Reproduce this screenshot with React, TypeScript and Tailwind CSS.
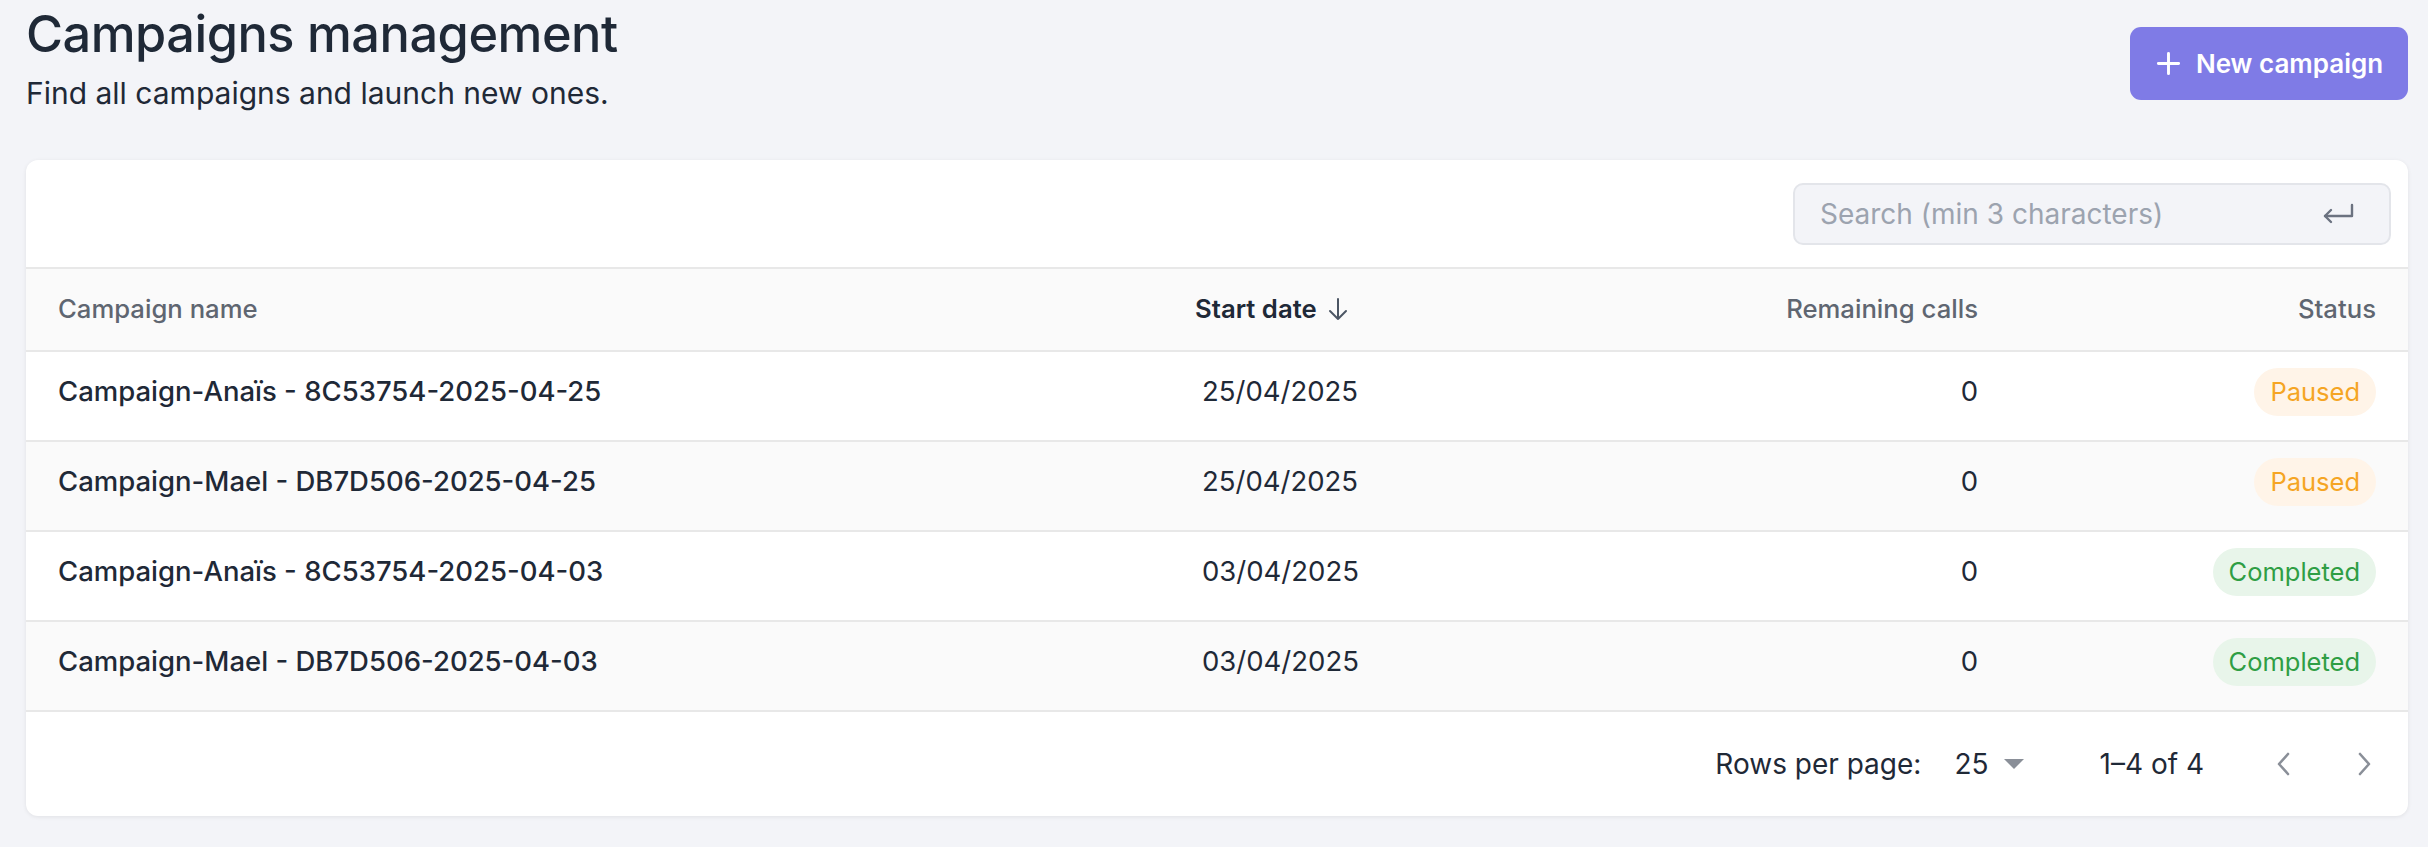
import React from 'react';

type Row = {
  name: string;
  date: string;
  remaining: number;
  status: 'Paused' | 'Completed';
};

const rows: Row[] = [
  { name: 'Campaign-Anaïs - 8C53754-2025-04-25', date: '25/04/2025', remaining: 0, status: 'Paused' },
  { name: 'Campaign-Mael - DB7D506-2025-04-25', date: '25/04/2025', remaining: 0, status: 'Paused' },
  { name: 'Campaign-Anaïs - 8C53754-2025-04-03', date: '03/04/2025', remaining: 0, status: 'Completed' },
  { name: 'Campaign-Mael - DB7D506-2025-04-03', date: '03/04/2025', remaining: 0, status: 'Completed' },
];

function StatusBadge({ status }: { status: Row['status'] }) {
  if (status === 'Paused') {
    return (
      <span className="inline-flex h-[48px] items-center rounded-full bg-[#fff4e8] px-[16px] text-[25.5px] text-[#f5a524]">
        Paused
      </span>
    );
  }
  return (
    <span className="inline-flex h-[48px] items-center rounded-full bg-[#e8f5ea] px-[16px] text-[25.5px] text-[#2f9e44]">
      Completed
    </span>
  );
}

export default function App() {
  return (
    <div className="min-h-[847px] bg-[#f3f4f8] pl-[26px] pr-[20px] pb-[31px] font-['Inter',sans-serif] text-[#1f2937]">
      {/* Page header */}
      <div className="flex items-start justify-between">
        <div className="pt-[4px]">
          <h1 className="text-[50.5px] font-medium leading-[60px] tracking-[-0.5px]">Campaigns management</h1>
          <p className="mt-[11px] text-[30px] leading-[36px]">Find all campaigns and launch new ones.</p>
        </div>
        <button className="mt-[27px] flex h-[73px] w-[278px] items-center justify-center gap-[14px] rounded-[11px] bg-[#7f7be6] text-[26px] font-semibold text-white">
          <svg width="27" height="27" viewBox="0 0 24 24" fill="none" stroke="currentColor" strokeWidth="2.6" strokeLinecap="round">
            <path d="M12 3v18M3 12h18" />
          </svg>
          New campaign
        </button>
      </div>

      {/* Table card */}
      <div className="mt-[49px] overflow-hidden rounded-[12px] bg-white shadow-[0_1px_4px_rgba(0,0,0,0.08)]">
        {/* Toolbar */}
        <div className="flex h-[107px] items-center justify-end pr-[17px]">
          <div className="flex h-[62px] w-[598px] items-center justify-between rounded-[10px] border-2 border-[#e3e5ea] bg-[#f3f4f8] pl-[25px] pr-[35px]">
            <span className="text-[28px] text-[#9ca3af]">Search (min 3 characters)</span>
            <svg width="32" height="22" viewBox="0 0 32 22" fill="none" stroke="#6b7280" strokeWidth="2.4" strokeLinecap="round" strokeLinejoin="round">
              <path d="M30 2v11H3" />
              <path d="M9 7l-6 6 6 6" />
            </svg>
          </div>
        </div>

        {/* Column header */}
        <div className="grid h-[83px] grid-cols-[1137px_437px_1fr_398px] items-center border-t-2 border-[#e8e8e8] bg-[#fafafa] text-[25.7px]">
          <div className="pl-[32px] font-medium text-[#5f6671]">Campaign name</div>
          <div className="flex items-center gap-[10px] pl-[32px] font-semibold text-[#1f2937]">
            Start date
            <svg width="22" height="26" viewBox="0 0 22 26" fill="none" stroke="#4b5563" strokeWidth="2" strokeLinecap="round" strokeLinejoin="round">
              <path d="M11 3v20M3 15l8 8 8-8" />
            </svg>
          </div>
          <div className="pr-[32px] text-right font-medium text-[#5f6671]">Remaining calls</div>
          <div className="pr-[32px] text-right font-medium text-[#5f6671]">Status</div>
        </div>

        {/* Rows */}
        {rows.map((r, i) => (
          <div
            key={r.name}
            className={`grid h-[90px] grid-cols-[1137px_437px_1fr_398px] items-center border-t-2 border-[#e8e8e8] pb-[8px] ${
              i % 2 === 1 ? 'bg-[#fafafa]' : 'bg-white'
            }`}
          >
            <div className="pl-[32px] text-[27.5px] font-medium">{r.name}</div>
            <div className="pl-[39px] text-[27.5px]">{r.date}</div>
            <div className="pr-[32px] text-right text-[27.5px]">{r.remaining}</div>
            <div className="flex justify-end pr-[32px]">
              <StatusBadge status={r.status} />
            </div>
          </div>
        ))}

        {/* Pagination */}
        <div className="flex h-[106px] items-center justify-end border-t-2 border-[#e8e8e8] pr-[36px] text-[28px]">
          <span>Rows per page:</span>
          <span className="ml-[33px]">25</span>
          <svg className="ml-[14px]" width="22" height="12" viewBox="0 0 22 12" fill="#8a8f98">
            <path d="M1 1h20L11 11z" />
          </svg>
          <span className="ml-[75px]">1–4 of 4</span>
          <svg className="ml-[72px]" width="15" height="24" viewBox="0 0 15 24" fill="none" stroke="#8a8f98" strokeWidth="2.6" strokeLinecap="round" strokeLinejoin="round">
            <path d="M12 2L3 12l9 10" />
          </svg>
          <svg className="ml-[66px]" width="15" height="24" viewBox="0 0 15 24" fill="none" stroke="#8a8f98" strokeWidth="2.6" strokeLinecap="round" strokeLinejoin="round">
            <path d="M3 2l9 10-9 10" />
          </svg>
        </div>
      </div>
    </div>
  );
}
